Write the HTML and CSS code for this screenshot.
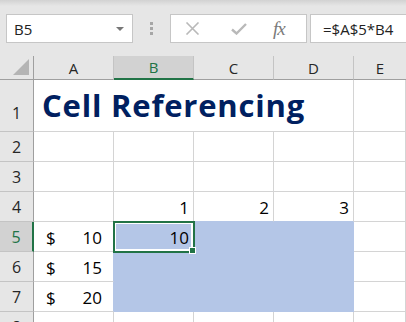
FILE: index.html
```html
<!DOCTYPE html>
<html lang="en">
	<head>
		<meta charset="UTF-8" />
		<title>Cell Referencing</title>
		<link rel="stylesheet" href="styles.css">
	</head>
	<body>
		<header class="ribbon">
			<div class="namebox"><span>B5</span><i class="caret"></i></div>
			<svg class="grip" width="3" height="13" viewBox="0 0 3 13"><rect y="0" width="3" height="3"/><rect y="5" width="3" height="3"/><rect y="10" width="3" height="3"/></svg>
			<div class="fxbar">
				<svg class="ico-x" width="15" height="13" viewBox="0 0 15 13"><path d="M1.5 0.5 L13.5 12.5 M13.5 0.5 L1.5 12.5"/></svg>
				<svg class="ico-ok" width="16" height="12" viewBox="0 0 16 12"><path d="M1 6.5 L5.5 10.5 L15 1"/></svg>
				<span class="fx">fx</span>
			</div>
			<div class="formula">=$A$5*B4</div>
		</header>
		<main class="sheet">
			<div class="c h corner"><svg width="17" height="17" viewBox="0 0 17 17"><path d="M16 0 L16 16 L0 16 Z"/></svg></div>
			<div class="c h col">A</div>
			<div class="c h col on">B</div>
			<div class="c h col">C</div>
			<div class="c h col">D</div>
			<div class="c h col last">E</div>

			<div class="c h row first">1</div>
			<div class="c title">Cell Referencing</div>
			<div class="c"></div>

			<div class="c h row">2</div>
			<div class="c"></div><div class="c"></div><div class="c"></div><div class="c"></div><div class="c"></div>

			<div class="c h row">3</div>
			<div class="c"></div><div class="c"></div><div class="c"></div><div class="c"></div><div class="c"></div>

			<div class="c h row">4</div>
			<div class="c"></div>
			<div class="c num">1</div>
			<div class="c num st">2</div>
			<div class="c num st">3</div>
			<div class="c"></div>

			<div class="c h row on">5</div>
			<div class="c acct"><span>$</span><span>10</span></div>
			<div class="c num sel active">10</div>
			<div class="c sel"></div>
			<div class="c sel"></div>
			<div class="c"></div>

			<div class="c h row">6</div>
			<div class="c acct sl"><span>$</span><span>15</span></div>
			<div class="c sel"></div>
			<div class="c sel"></div>
			<div class="c sel"></div>
			<div class="c"></div>

			<div class="c h row">7</div>
			<div class="c acct sl"><span>$</span><span>20</span></div>
			<div class="c sel"></div>
			<div class="c sel"></div>
			<div class="c sel"></div>
			<div class="c"></div>

			<div class="c h row">8</div>
			<div class="c"></div><div class="c"></div><div class="c"></div><div class="c"></div><div class="c"></div>
		</main>
	</body>
</html>
```
FILE: styles.css
```css
html,body{
	margin:0;
	height:100%;
	overflow:hidden;
}
body{
	background-color:#e6e6e6;
	font-family:"Open Sans","Liberation Sans",sans-serif;
	color:#000;
}

/* formula bar */
.ribbon{
	box-sizing:border-box;
	height:56px;
	padding-top:14px;
	display:flex;
	align-items:flex-start;
	background:linear-gradient(#d2d2d2,#e6e6e6 6px);
}
.namebox,.fxbar,.formula{
	box-sizing:border-box;
	height:29px;
	border:1px solid #c6c6c6;
	background-color:#fff;
	display:flex;
	align-items:center;
}
.namebox{
	margin-left:6px;
	width:127px;
	padding-left:7px;
	font-size:15px;
	color:#222;
}
.caret{
	margin-left:auto;
	margin-right:8px;
	border-left:4px solid transparent;
	border-right:4px solid transparent;
	border-top:4px solid #777;
}
.grip{
	margin:8px 0 0 17px;
	fill:#a6a6a6;
}
.fxbar{
	margin-left:17px;
	width:137px;
	padding-left:14px;
}
.fxbar svg{
	fill:none;
	stroke:#b9b9b9;
	stroke-width:1.6;
}
.ico-ok{
	margin-left:31px;
	stroke-width:2.4 !important;
}
.fx{
	margin-left:26px;
	font-family:"Liberation Serif",serif;
	font-style:italic;
	font-size:19px;
	color:#7a7a7a;
	letter-spacing:-1px;
}
.formula{
	margin-left:3px;
	flex:1;
	border-right:0;
	padding-left:12px;
	font-size:15px;
	color:#222;
}

/* grid */
.sheet{
	display:grid;
	grid-template-columns:34px repeat(4,80px) 1fr;
	grid-template-rows:24px 52px repeat(7,30px);
	background-color:#fff;
}
.c{
	box-sizing:border-box;
	min-width:0;
	border-right:1px solid #d4d4d4;
	border-bottom:1px solid #d4d4d4;
	display:flex;
	align-items:flex-end;
	padding:0 4px 3px;
	font-size:17px;
	line-height:20px;
	white-space:nowrap;
}
.h{
	background-color:#e6e6e6;
	border-color:#c4c4c4;
	justify-content:center;
	color:#262626;
	padding:0;
}
.col{
	align-items:center;
	font-size:15px;
	border-bottom-color:#9f9f9f;
}
.col.last{
	border-right:0;
}
.row{
	font-size:16px;
	padding-bottom:4px;
	border-right-color:#9f9f9f;
}
.row.first{
	padding-bottom:8px;
}
.corner{
	border-right-color:#9f9f9f;
	border-bottom-color:#9f9f9f;
	align-items:flex-end;
	justify-content:flex-end;
	padding:0 3px 3px 0;
}
.corner svg{
	fill:#b4b4b4;
}
.h.on{
	background-color:#d2d2d2;
	color:#217346;
}
.col.on{
	border-bottom:2px solid #217346;
}
.row.on{
	border-right:2px solid #217346;
}

.title{
	grid-column:span 4;
	padding:0 0 9px 8px;
	font-size:31px;
	line-height:34px;
	font-weight:700;
	letter-spacing:0.8px;
	color:#002060;
}
.num{
	justify-content:flex-end;
}
.acct{
	justify-content:space-between;
	padding:0 11px 3px 12px;
}
.sel{
	background-color:#b4c6e7;
	border-color:#b4c6e7;
}
.sl{
	border-right-color:#b4c6e7;
}
.st{
	border-bottom-color:#b4c6e7;
}
.active{
	position:relative;
	z-index:1;
	outline:2px solid #217346;
	outline-offset:-1px;
	box-shadow:inset 0 0 0 2px #fff;
}
.active::after{
	content:"";
	position:absolute;
	right:-3px;
	bottom:-3px;
	box-sizing:border-box;
	width:7px;
	height:7px;
	background-color:#217346;
	border:1px solid #fff;
}
```
